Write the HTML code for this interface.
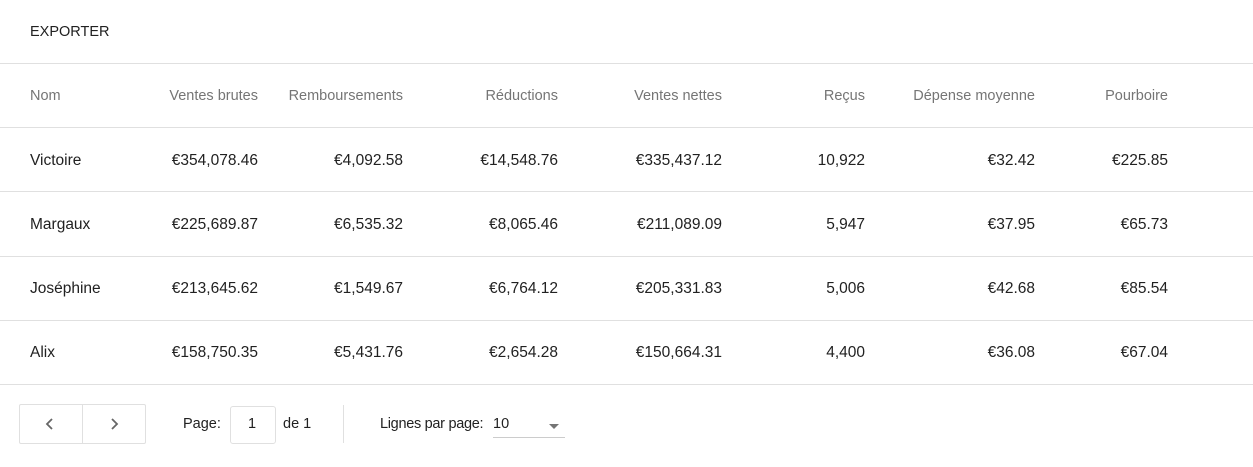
<!DOCTYPE html>
<html><head><style>
body{margin:0;width:1253px;height:467px;background:#fff;font-family:"Liberation Sans",Roboto,sans-serif;font-size:15.5px;color:#212121;position:relative;overflow:hidden}
.a{position:absolute;white-space:nowrap;line-height:20px}
.h{color:#757575}
.line{position:absolute;left:0;width:1253px;height:1px;background:#e0e0e0}
</style></head><body>
<div class="a" style="left:30px;top:22px;font-size:14.5px;color:#212121">EXPORTER</div>
<div class="line" style="top:63px"></div>
<div class="line" style="top:127px"></div>
<div class="line" style="top:191px"></div>
<div class="line" style="top:256px"></div>
<div class="line" style="top:320px"></div>
<div class="line" style="top:384px"></div>
<div id="t"></div>
<script>
var cols=[[30,0],[258,1],[403,1],[558,1],[722,1],[865,1],[1035,1],[1168,1]];
var rows=[["Nom","Ventes brutes","Remboursements","Réductions","Ventes nettes","Reçus","Dépense moyenne","Pourboire"],
["Victoire","€354,078.46","€4,092.58","€14,548.76","€335,437.12","10,922","€32.42","€225.85"],
["Margaux","€225,689.87","€6,535.32","€8,065.46","€211,089.09","5,947","€37.95","€65.73"],
["Joséphine","€213,645.62","€1,549.67","€6,764.12","€205,331.83","5,006","€42.68","€85.54"],
["Alix","€158,750.35","€5,431.76","€2,654.28","€150,664.31","4,400","€36.08","€67.04"]];
var h="";
rows.forEach(function(r,i){var top=(i==0?86:87)+64*i;r.forEach(function(c,j){var col=cols[j];
var pos=col[1]?"right:"+(1253-col[0])+"px":"left:"+col[0]+"px";
h+='<div class="a'+(i==0?' h':'')+'" style="'+pos+';top:'+top+'px;'+(i==0?'font-size:14.5px':'')+'">'+c+'</div>';});});
document.getElementById("t").innerHTML=h;
</script>
<div style="position:absolute;left:19px;top:404px;width:125px;height:38px;border:1px solid #e0e0e0;border-radius:2px"></div>
<div style="position:absolute;left:82px;top:405px;width:1px;height:38px;background:#e0e0e0"></div>
<svg style="position:absolute;left:40px;top:414px" width="20" height="20"><path d="M12 5L7 10L12 15" fill="none" stroke="#666" stroke-width="1.8"/></svg>
<svg style="position:absolute;left:104px;top:414px" width="20" height="20"><path d="M8 5L13 10L8 15" fill="none" stroke="#666" stroke-width="1.8"/></svg>
<div class="a" style="left:183px;top:414px;font-size:14.5px">Page:</div>
<div style="position:absolute;left:230px;top:406px;width:44px;height:36px;border:1px solid #e0e0e0;border-radius:3px"></div>
<div class="a" style="left:248px;top:414px;font-size:14.5px">1</div>
<div class="a" style="left:283px;top:414px;font-size:14.5px">de 1</div>
<div style="position:absolute;left:343px;top:405px;width:1px;height:38px;background:#e0e0e0"></div>
<div class="a" style="left:380px;top:414px;font-size:14.5px;letter-spacing:-0.3px">Lignes par page:</div>
<div class="a" style="left:493px;top:414px;font-size:14.5px">10</div>
<div style="position:absolute;left:549px;top:424px;width:0;height:0;border-left:5px solid transparent;border-right:5px solid transparent;border-top:5px solid #757575"></div>
<div style="position:absolute;left:493px;top:437px;width:72px;height:1px;background:#ccc"></div>
</body></html>
